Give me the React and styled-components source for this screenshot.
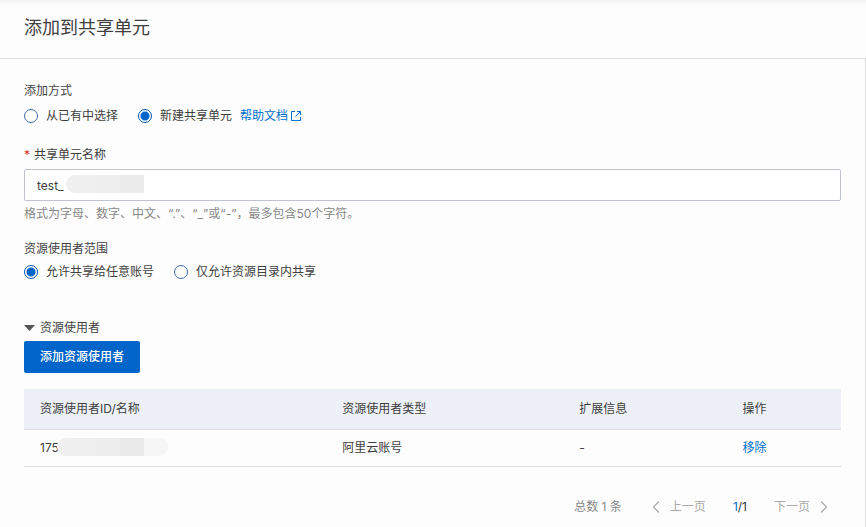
import React, { useState } from "react";
import styled, { createGlobalStyle } from "styled-components";

const GlobalStyle = createGlobalStyle`
  *, *::before, *::after { box-sizing: border-box; }
  body {
    margin: 0;
    background: #fdfdfd;
    color: #404040;
    font: 12px/20px Inter, "Noto Sans CJK SC", sans-serif;
  }
  button, input { font: inherit; color: inherit; }
`;

const Drawer = styled.div`
  display: flex;
  flex-direction: column;
  min-height: 100vh;
`;

const Header = styled.header`
  padding: 14px 24px 16px;
  border-bottom: 1px solid #dedede;
  background: linear-gradient(#f1f1f1, #fdfdfd 4px);
`;

const Title = styled.h1`
  margin: 0;
  font-size: 18px;
  line-height: 28px;
  font-weight: 400;
`;

const Body = styled.main`
  flex: 1;
  padding: 22px 24px 0;
  border-right: 1px solid #dedede;
`;

const Group = styled.fieldset`
  margin: 0 0 ${(p) => p.$space}px;
  padding: 0;
  border: 0;
  min-width: 0;
`;

const Legend = styled.legend`
  padding: 0;
  color: #444;
`;

const Choices = styled.div`
  display: flex;
  align-items: center;
  padding-top: ${(p) => p.$top}px;
`;

const Choice = styled.label`
  display: flex;
  align-items: center;
  gap: 8px;
  margin-right: ${(p) => p.$after}px;
  cursor: pointer;
`;

const Radio = styled.input`
  appearance: none;
  width: 14px;
  height: 14px;
  margin: 0;
  border: 1px solid #3f6ca6;
  border-radius: 50%;
  background: #fff;

  &:checked {
    border-color: #0054ad;
    background: radial-gradient(circle, #0064c8 4px, #fff 5px);
  }
`;

const Link = styled.a`
  display: inline-flex;
  align-items: center;
  gap: 3px;
  color: #0070cc;
  text-decoration: none;
`;

const Field = styled.div`
  margin-bottom: 15px;
`;

const FieldLabel = styled.label`
  display: flex;
  gap: 4px;
  margin-bottom: 4px;
`;

const Required = styled.span`
  width: 6px;
  text-align: right;
  color: #d93026;
`;

const InputWrap = styled.div`
  position: relative;
`;

const TextInput = styled.input`
  display: block;
  width: 100%;
  height: 32px;
  padding: 0 12px;
  border: 1px solid #c0c4cf;
  border-radius: 2px;
  background: #fff;
`;

const Mask = styled.span`
  position: absolute;
  top: ${(p) => p.$top}px;
  left: ${(p) => p.$left}px;
  width: ${(p) => p.$width}px;
  height: 18px;
  border-radius: ${(p) => (p.$open ? "9px 0 0 9px" : "9px")};
  background: ${(p) =>
    p.$open
      ? "linear-gradient(90deg, #f0f0f0 30px, #eeeeee 30px 54px, #ececec 54px)"
      : "linear-gradient(90deg, #efefef 39px, #ededed 39px 63px, #eaeaea 63px 87px, #f6f6f6 87px)"};
`;

const Hint = styled.p`
  margin: 3px 0 0;
  color: #888;
`;

const Toggle = styled.button`
  display: flex;
  align-items: center;
  gap: 5px;
  padding: 0;
  border: 0;
  background: none;
  color: #444;
  cursor: pointer;
`;

const Arrow = styled.svg`
  width: 11px;
  height: 6px;
  fill: #555;
  transform: ${(p) => (p.$open ? "none" : "rotate(-90deg)")};
`;

const Primary = styled.button`
  display: block;
  height: 32px;
  margin: 3px 0 16px;
  padding: 0 16px;
  border: 0;
  border-radius: 2px;
  background: #0064c8;
  color: #fff;
  font-weight: 500;
  cursor: pointer;
`;

const Table = styled.table`
  width: 100%;
  border-collapse: separate;
  border-spacing: 0;
  table-layout: fixed;
  text-align: left;
`;

const HeadCell = styled.th`
  width: ${(p) => p.$width}%;
  height: 41px;
  padding: 0 16px;
  background: #edf0f7;
  border-bottom: 1px solid #dcdee3;
  font-weight: 400;
`;

const Cell = styled.td`
  position: relative;
  height: 37px;
  padding: 0 16px;
  border-bottom: 1px solid #dedede;
`;

const TextButton = styled.button`
  padding: 0;
  border: 0;
  background: none;
  color: #0070cc;
  cursor: pointer;
`;

const Pagination = styled.nav`
  display: flex;
  justify-content: flex-end;
  align-items: center;
  padding: 30px 13px 8px 0;
  color: #888;
`;

const PageButton = styled.button`
  display: flex;
  align-items: center;
  gap: 10px;
  padding: 0;
  border: 0;
  background: none;
  color: #aaa;
`;

const PageCount = styled.span`
  margin: 0 27px;
  color: #333;
`;

const Total = styled.span`
  margin-right: 30px;
`;

const Current = styled.span`
  color: #0070cc;
`;

const Chevron = styled.svg`
  width: 8px;
  height: 12px;
  fill: none;
  stroke: currentColor;
  stroke-width: 1.25;
`;

const columns = [
  ["资源使用者ID/名称", 37],
  ["资源使用者类型", 29],
  ["扩展信息", 20],
  ["操作", 14],
];

function RadioOption({ name, value, current, onChange, after, children }) {
  return (
    <Choice $after={after}>
      <Radio
        type="radio"
        name={name}
        value={value}
        checked={current === value}
        onChange={() => onChange(value)}
      />
      {children}
    </Choice>
  );
}

function ExternalIcon() {
  return (
    <svg width="10" height="10" viewBox="0 0 10 10" fill="none" stroke="currentColor" aria-hidden="true">
      <path d="M4 .5H.5v9h9V6M6 .5h3.500V4M9.500.5 4.500 5.500" />
    </svg>
  );
}

export default function App() {
  const [mode, setMode] = useState("new");
  const [scope, setScope] = useState("any");
  const [name, setName] = useState("test_");
  const [open, setOpen] = useState(true);

  return (
    <>
      <GlobalStyle />
      <Drawer>
        <Header>
          <Title>添加到共享单元</Title>
        </Header>
        <Body>
          <Group $space={19}>
            <Legend>添加方式</Legend>
            <Choices $top={5}>
              <RadioOption name="mode" value="existing" current={mode} onChange={setMode} after={20}>
                从已有中选择
              </RadioOption>
              <RadioOption name="mode" value="new" current={mode} onChange={setMode} after={8}>
                新建共享单元
              </RadioOption>
              <Link href="#help">
                帮助文档
                <ExternalIcon />
              </Link>
            </Choices>
          </Group>

          <Field>
            <FieldLabel htmlFor="unit-name">
              <Required>*</Required>
              共享单元名称
            </FieldLabel>
            <InputWrap>
              <TextInput
                id="unit-name"
                value={name}
                onChange={(e) => setName(e.target.value)}
                aria-describedby="unit-hint"
                required
              />
              <Mask $open $top={6} $left={42} $width={78} />
            </InputWrap>
            <Hint id="unit-hint">格式为字母、数字、中文、“.”、“_”或“-”，最多包含50个字符。</Hint>
          </Field>

          <Group $space={36}>
            <Legend>资源使用者范围</Legend>
            <Choices $top={3}>
              <RadioOption name="scope" value="any" current={scope} onChange={setScope} after={20}>
                允许共享给任意账号
              </RadioOption>
              <RadioOption name="scope" value="directory" current={scope} onChange={setScope} after={0}>
                仅允许资源目录内共享
              </RadioOption>
            </Choices>
          </Group>

          <Toggle type="button" aria-expanded={open} onClick={() => setOpen(!open)}>
            <Arrow $open={open} viewBox="0 0 11 6" aria-hidden="true">
              <path d="M0 0h11L5.500 6z" />
            </Arrow>
            资源使用者
          </Toggle>

          {open && (
            <>
              <Primary type="button">添加资源使用者</Primary>
              <Table>
                <thead>
                  <tr>
                    {columns.map(([label, width]) => (
                      <HeadCell key={label} $width={width} scope="col">
                        {label}
                      </HeadCell>
                    ))}
                  </tr>
                </thead>
                <tbody>
                  <tr>
                    <Cell>
                      175
                      <Mask $top={8} $left={33} $width={111} />
                    </Cell>
                    <Cell>阿里云账号</Cell>
                    <Cell>-</Cell>
                    <Cell>
                      <TextButton type="button">移除</TextButton>
                    </Cell>
                  </tr>
                </tbody>
              </Table>
              <Pagination aria-label="分页">
                <Total>总数 1 条</Total>
                <PageButton type="button" disabled>
                  <Chevron viewBox="0 0 8 12" aria-hidden="true">
                    <path d="M7 .5 1.500 6 7 11.500" />
                  </Chevron>
                  上一页
                </PageButton>
                <PageCount>
                  <Current>1</Current>/1
                </PageCount>
                <PageButton type="button" disabled>
                  下一页
                  <Chevron viewBox="0 0 8 12" aria-hidden="true">
                    <path d="M1 .5 6.500 6 1 11.500" />
                  </Chevron>
                </PageButton>
              </Pagination>
            </>
          )}
        </Body>
      </Drawer>
    </>
  );
}
